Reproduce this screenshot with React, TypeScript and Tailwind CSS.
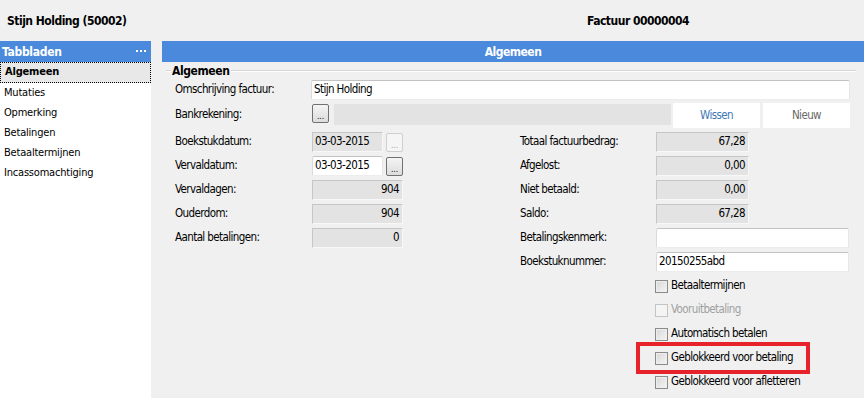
import React from "react";

const narrow = "font-['DejaVu_Sans_Condensed','DejaVu_Sans',sans-serif] text-[11.5px] tracking-[-0.6px]";
const tahoma = "font-['DejaVu_Sans_Condensed','DejaVu_Sans',sans-serif]";

function DotsButton({ disabled }: { disabled?: boolean }) {
  return (
    <div
      className={
        disabled
          ? "w-[17px] h-[19px] rounded-[2px] border border-[#cfcfcf] bg-[#f5f5f5] flex items-end justify-center pb-[2px] text-[9px] leading-none text-[#a8a8a8]"
          : "w-[17px] h-[19px] rounded-[2px] border border-[#707070] bg-gradient-to-b from-[#f4f4f4] to-[#dcdcdc] flex items-end justify-center pb-[2px] text-[9px] leading-none text-[#222]"
      }
    >
      ...
    </div>
  );
}

function GreyField({ value, className, right }: { value?: string; className: string; right?: boolean }) {
  return (
    <div
      className={`${className} h-[20px] bg-[#e3e3e3] border border-t-[#c6c6c6] border-l-[#c6c6c6] border-r-[#f7f7f7] border-b-[#f7f7f7] flex items-center ${
        right ? "justify-end pr-[3px]" : "pl-[2px]"
      } ${narrow} text-black`}
    >
      {value}
    </div>
  );
}

function WhiteField({ value, className }: { value?: string; className: string }) {
  return (
    <div
      className={`${className} h-[20px] bg-white border border-t-[#c3c3c3] border-l-[#dadada] border-r-[#e6e6e6] border-b-[#ececec] rounded-[2px] flex items-center pl-[2px] ${narrow} text-black`}
    >
      {value}
    </div>
  );
}

function Label({ children, className }: { children?: React.ReactNode; className: string }) {
  return <div className={`${className} ${narrow} text-black`}>{children}</div>;
}

function Checkbox({ label, disabled, highlight }: { label: string; disabled?: boolean; highlight?: boolean }) {
  return (
    <div className="relative flex items-center h-[20px]">
      <div
        className={
          disabled
            ? "w-[13px] h-[13px] border border-[#c4c4c4] bg-[#f4f4f4]"
            : "w-[13px] h-[13px] border border-[#8a8a8a] bg-gradient-to-br from-[#d6d6d6] to-[#f6f6f6] shadow-[inset_0_0_0_1px_#eeeeee]"
        }
      />
      <span className={`ml-[3px] ${narrow} ${disabled ? "text-[#a0a0a0]" : "text-black"}`}>{label}</span>
      {highlight && (
        <div className="absolute left-[-19px] top-[-6px] w-[174px] h-[32px] border-[4px] border-[#e8222b]" />
      )}
    </div>
  );
}

const sideItems = ["Mutaties", "Opmerking", "Betalingen", "Betaaltermijnen", "Incassomachtiging"];

export default function App() {
  return (
    <div className="w-[864px] h-[398px] bg-[#f0f0f0] overflow-hidden flex flex-col">
      <div className={`h-[41px] flex items-center ${tahoma} text-[12px] tracking-[-0.5px] font-bold text-black`}>
        <div className="w-[587px] pl-[7px]">Stijn Holding (50002)</div>
        <div>Factuur 00000004</div>
      </div>
      <div className="flex flex-1">
        <div className="w-[151px] flex flex-col">
          <div className={`h-[21px] bg-[#4a89dc] flex items-center justify-between pl-[2px] pr-[5px] ${tahoma} text-[12px] tracking-[-0.3px] font-bold text-white`}>
            <span>Tabbladen</span>
            <span className="flex gap-[2px] pb-[1px]">
              <span className="w-[2px] h-[2px] bg-white" />
              <span className="w-[2px] h-[2px] bg-white" />
              <span className="w-[2px] h-[2px] bg-white" />
            </span>
          </div>
          <div className={`flex-1 bg-white ${tahoma} text-[11px] tracking-[-0.2px] text-black`}>
            <div className="h-[21px] bg-[#e8e8e8] border border-dotted border-black flex items-center pl-[4px] font-bold">
              Algemeen
            </div>
            {sideItems.map((s) => (
              <div key={s} className="h-[20px] flex items-center pl-[4px]">
                {s}
              </div>
            ))}
          </div>
        </div>
        <div className="ml-[11px] flex-1 flex flex-col">
          <div className={`h-[21px] bg-[#4a89dc] flex items-center justify-center ${tahoma} text-[12px] tracking-[-0.5px] font-bold text-white`}>
            Algemeen
          </div>
          <div className="flex flex-col pl-[4px]">
            <div className="h-[16px] mt-[1px] flex items-center pr-[8px]">
              <div className="w-[5px] border-t border-t-[#d5d5d5] border-b border-b-white" />
              <span className={`px-[1px] ${tahoma} text-[12px] tracking-[-0.4px] font-bold text-black`}>Algemeen</span>
              <div className="flex-1 border-t border-t-[#d5d5d5] border-b border-b-white" />
            </div>
            <div className="pl-[9px] flex items-center mt-[1px]">
              <Label className="w-[136px]">Omschrijving factuur:</Label>
              <WhiteField className="w-[539px]" value="Stijn Holding" />
            </div>
            <div className="pl-[9px] flex items-start h-[25px] mt-[3px]">
              <Label className="w-[137px] h-[21px] flex items-center mt-[1px]">Bankrekening:</Label>
              <div className="mt-[1px]">
                <DotsButton />
              </div>
              <div className="w-[337px] h-[21px] mt-[1px] ml-[5px] bg-[#e3e3e3]" />
              <div className={`w-[87px] h-[25px] ml-[2px] bg-white flex items-center justify-center ${narrow} text-[#3f78b5]`}>
                Wissen
              </div>
              <div className={`w-[87px] h-[25px] ml-[3px] bg-white flex items-center justify-center ${narrow} text-[#6a6a6a]`}>
                Nieuw
              </div>
            </div>
            <div className="pl-[9px] mt-[4px] flex flex-col gap-[4px]">
              <div className="flex items-center h-[20px]">
                <Label className="w-[137px]">Boekstukdatum:</Label>
                <div className="w-[208px] flex items-center gap-[3px]">
                  <GreyField className="w-[71px]" value="03-03-2015" />
                  <DotsButton disabled />
                </div>
                <Label className="w-[136px]">Totaal factuurbedrag:</Label>
                <GreyField className="w-[93px]" value="67,28" right />
              </div>
              <div className="flex items-center h-[20px]">
                <Label className="w-[137px]">Vervaldatum:</Label>
                <div className="w-[208px] flex items-center gap-[3px]">
                  <WhiteField className="w-[71px]" value="03-03-2015" />
                  <DotsButton />
                </div>
                <Label className="w-[136px]">Afgelost:</Label>
                <GreyField className="w-[93px]" value="0,00" right />
              </div>
              <div className="flex items-center h-[20px]">
                <Label className="w-[137px]">Vervaldagen:</Label>
                <div className="w-[208px]">
                  <GreyField className="w-[91px]" value="904" right />
                </div>
                <Label className="w-[136px]">Niet betaald:</Label>
                <GreyField className="w-[93px]" value="0,00" right />
              </div>
              <div className="flex items-center h-[20px]">
                <Label className="w-[137px]">Ouderdom:</Label>
                <div className="w-[208px]">
                  <GreyField className="w-[91px]" value="904" right />
                </div>
                <Label className="w-[136px]">Saldo:</Label>
                <GreyField className="w-[93px]" value="67,28" right />
              </div>
              <div className="flex items-center h-[20px]">
                <Label className="w-[137px]">Aantal betalingen:</Label>
                <div className="w-[208px]">
                  <GreyField className="w-[91px]" value="0" right />
                </div>
                <Label className="w-[136px]">Betalingskenmerk:</Label>
                <WhiteField className="w-[193px]" />
              </div>
              <div className="flex items-center h-[20px]">
                <div className="w-[345px]" />
                <Label className="w-[136px]">Boekstuknummer:</Label>
                <WhiteField className="w-[193px]" value="20150255abd" />
              </div>
              <div className="flex flex-col gap-[4px] pl-[480px]">
                <Checkbox label="Betaaltermijnen" />
                <Checkbox label="Vooruitbetaling" disabled />
                <Checkbox label="Automatisch betalen" />
                <Checkbox label="Geblokkeerd voor betaling" highlight />
                <Checkbox label="Geblokkeerd voor afletteren" />
              </div>
            </div>
          </div>
        </div>
      </div>
    </div>
  );
}
